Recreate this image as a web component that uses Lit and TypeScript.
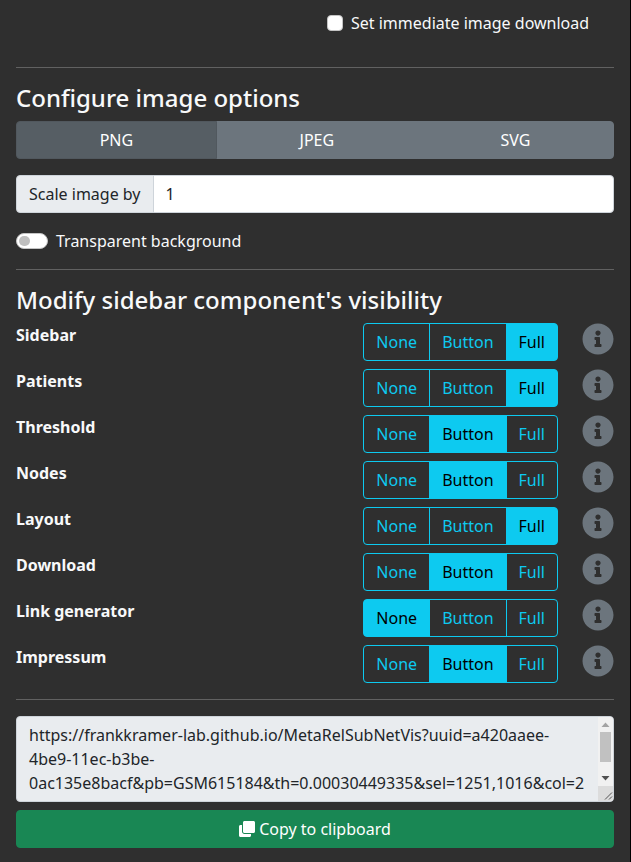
import { LitElement, html, css } from "lit";
import { customElement, state } from "lit/decorators.js";
import { classMap } from "lit/directives/class-map.js";

const FORMATS = ["PNG", "JPEG", "SVG"];
const LEVELS = ["None", "Button", "Full"];

@customElement("app-root")
export class AppRoot extends LitElement {
  @state() private format = "PNG";
  @state() private components = [
    { name: "Sidebar", level: "Full" },
    { name: "Patients", level: "Full" },
    { name: "Threshold", level: "Button" },
    { name: "Nodes", level: "Button" },
    { name: "Layout", level: "Full" },
    { name: "Download", level: "Button" },
    { name: "Link generator", level: "None" },
    { name: "Impressum", level: "Button" },
  ];

  static styles = css`
    :host {
      display: block;
      box-sizing: border-box;
      height: 862px;
      overflow: hidden;
      padding: 11px 16px 0;
      background: #2f2f2f;
      border-right: 1px solid #000;
      color: #f8f9fa;
      font: 16px/24px "Noto Sans", sans-serif;
    }
    * { box-sizing: border-box; }
    button {
      font: inherit;
      height: 38px;
      padding: 6px 12px;
      margin: 0;
      border: 1px solid;
      cursor: pointer;
    }
    .immediate {
      display: flex;
      align-items: center;
      gap: 8px;
      margin-left: 311px;
      height: 24px;
    }
    .checkbox {
      width: 16px;
      height: 16px;
      border-radius: 4px;
      background: #fff;
      border: 1px solid #c4c4c4;
    }
    .rule {
      height: 1px;
      background: #616161;
      margin: 16px 0;
    }
    .rule.first { margin-top: 32px; }
    h4 {
      margin: 0 0 8px;
      font-size: 24px;
      font-weight: 500;
      line-height: 28.8px;
    }
    .formats { display: flex; margin-bottom: 16px; }
    .formats button {
      flex: 1 1 auto;
      background: #6c757d;
      border-color: #6c757d;
      color: #fff;
    }
    .formats button + button { margin-left: -1px; }
    .formats button.on { background: #565e64; border-color: #51585e; z-index: 1; }
    .formats button:first-child, .levels button:first-child { border-radius: 4px 0 0 4px; }
    .formats button:last-child, .levels button:last-child { border-radius: 0 4px 4px 0; }
    .scale { display: flex; height: 38px; color: #212529; margin-bottom: 16px; }
    .prefix {
      padding: 6px 12px;
      background: #e9ecef;
      border: 1px solid #ced4da;
      border-radius: 4px 0 0 4px;
    }
    .value {
      flex: 1;
      margin-left: -1px;
      padding: 6px 12px;
      background: #fff;
      border: 1px solid #ced4da;
      border-radius: 0 4px 4px 0;
    }
    .transparent { display: flex; align-items: center; gap: 8px; }
    .switch {
      display: flex;
      align-items: center;
      width: 32px;
      height: 16px;
      padding-left: 2px;
      border-radius: 8px;
      background: #fff;
      border: 1px solid #c4c4c4;
    }
    .knob { width: 10.5px; height: 10.5px; border-radius: 50%; background: #bfbfbf; }
    .row { display: flex; align-items: flex-start; height: 38px; margin-bottom: 8px; }
    .row.last { margin-bottom: 0; }
    .name { flex: 1; font-weight: 700; }
    .levels { display: flex; margin-right: 24px; }
    .levels button { background: transparent; border-color: #0dcaf0; color: #0dcaf0; }
    .levels button + button { margin-left: -1px; }
    .levels button.on { background: #0dcaf0; color: #000; }
    .info { width: 32px; height: 32px; fill: #6c757d; display: block; }
    .link {
      display: flex;
      height: 86px;
      overflow: hidden;
      background: #e9ecef;
      border: 1px solid #ced4da;
      border-radius: 4px;
      color: #212529;
      margin-bottom: 8px;
    }
    .url { flex: 1; padding: 6px 0 0 12px; white-space: pre; }
    .track { width: 15px; background: #f1f1f1; display: flex; flex-direction: column; }
    .arrow { display: block; width: 15px; height: 15px; }
    .up { fill: #a3a3a3; }
    .down { fill: #505050; }
    .lane { height: 39px; padding: 0 2px; }
    .thumb { height: 30px; background: #c1c1c1; }
    .grip { display: block; width: 15px; height: 15px; background: #dcdcdc; stroke: #555; fill: none; }
    .copy {
      display: flex;
      width: 100%;
      align-items: center;
      justify-content: center;
      gap: 4px;
      background: #198754;
      border-color: #198754;
      border-radius: 4px;
      color: #fff;
    }
    .clone { width: 16px; height: 16px; fill: #fff; }
  `;

  private setLevel(index: number, level: string) {
    this.components = this.components.map((c, i) => (i === index ? { ...c, level } : c));
  }

  render() {
    return html`
      <div class="immediate"><span class="checkbox"></span><span>Set immediate image download</span></div>
      <div class="rule first"></div>
      <h4>Configure image options</h4>
      <div class="formats">
        ${FORMATS.map((f) => html`<button class=${classMap({ on: f === this.format })} @click=${() => (this.format = f)}>${f}</button>`)}
      </div>
      <div class="scale"><span class="prefix">Scale image by</span><span class="value">1</span></div>
      <div class="transparent"><span class="switch"><span class="knob"></span></span><span>Transparent background</span></div>
      <div class="rule"></div>
      <h4>Modify sidebar component's visibility</h4>
      ${this.components.map(
        (c, i) => html`<div class=${classMap({ row: true, last: i === this.components.length - 1 })}>
          <span class="name">${c.name}</span>
          <div class="levels">
            ${LEVELS.map((l) => html`<button class=${classMap({ on: l === c.level })} @click=${() => this.setLevel(i, l)}>${l}</button>`)}
          </div>
          <svg class="info" viewBox="0 0 512 512"><path d="M256 8C119.043 8 8 119.083 8 256c0 136.997 111.043 248 248 248s248-111.003 248-248C504 119.083 392.957 8 256 8zm0 110c23.196 0 42 18.804 42 42s-18.804 42-42 42-42-18.804-42-42 18.804-42 42-42zm56 254c0 6.627-5.373 12-12 12h-88c-6.627 0-12-5.373-12-12v-24c0-6.627 5.373-12 12-12h12v-64h-12c-6.627 0-12-5.373-12-12v-24c0-6.627 5.373-12 12-12h64c6.627 0 12 5.373 12 12v100h12c6.627 0 12 5.373 12 12v24z"/></svg>
        </div>`
      )}
      <div class="rule"></div>
      <div class="link">
        <div class="url">https://frankkramer-lab.github.io/MetaRelSubNetVis?uuid=a420aaee-<br>4be9-11ec-b3be-<br>0ac135e8bacf&amp;pb=GSM615184&amp;th=0.00030449335&amp;sel=1251,1016&amp;col=2</div>
        <div class="track">
          <svg class="arrow up" viewBox="0 0 15 15"><path d="M3.5 10h8L7.5 5.5z"/></svg>
          <div class="lane"><div class="thumb"></div></div>
          <svg class="arrow down" viewBox="0 0 15 15"><path d="M3.5 5h8L7.5 9.5z"/></svg>
          <svg class="grip" viewBox="0 0 15 15"><path d="M7 13.5L14 6.500M11 13.500l3-3"/></svg>
        </div>
      </div>
      <button class="copy">
        <svg class="clone" viewBox="0 0 512 512"><path d="M464 0c26.51 0 48 21.49 48 48v288c0 26.51-21.49 48-48 48H176c-26.51 0-48-21.49-48-48V48c0-26.51 21.49-48 48-48h288M176 416c-44.112 0-80-35.888-80-80V128H48c-26.51 0-48 21.49-48 48v288c0 26.51 21.49 48 48 48h288c26.51 0 48-21.49 48-48v-48H176z"/></svg>
        <span>Copy to clipboard</span>
      </button>
    `;
  }
}
